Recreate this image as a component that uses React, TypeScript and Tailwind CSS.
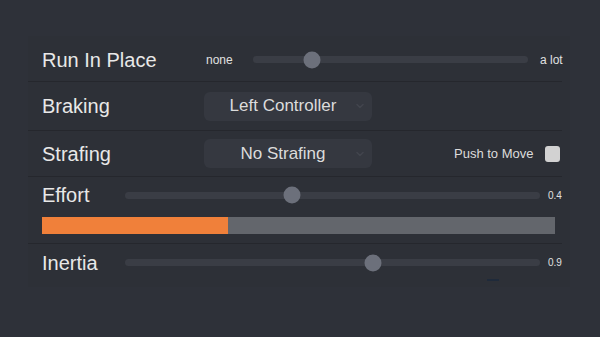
import { ChevronDown } from 'lucide-react';

const font = { fontFamily: '"Liberation Sans", Arial, sans-serif' };

function Slider({ value, className }: { value: number; className: string }) {
  return (
    <div className={`relative h-[7px] shrink-0 rounded-full bg-[#3a3d45] ${className}`}>
      <div
        className="absolute top-1/2 h-[17px] w-[17px] -translate-x-1/2 -translate-y-1/2 rounded-full bg-[#6c707b]"
        style={{ left: `${value * 100}%` }}
      />
    </div>
  );
}

function Select({ label }: { label: string }) {
  return (
    <div className="flex h-[29px] w-[168px] shrink-0 items-center rounded-md bg-[#353840] pl-[8px] pr-[6px]">
      <span className="flex-1 text-center text-[17px] text-[#dcdcdc]">{label}</span>
      <ChevronDown className="h-[12px] w-[12px] text-[#42454d]" strokeWidth={3} />
    </div>
  );
}

export default function App() {
  return (
    <div className="h-[337px] w-[600px] overflow-hidden bg-[#2e3139] pt-[36px]" style={font}>
      <div className="ml-[28px] w-[542px] bg-[#2d3037] pb-[6px]">
        <div className="mr-[8px] flex h-[46px] items-center whitespace-nowrap border-b border-[#25272d] pl-[14px] pt-[2px]">
          <span className="w-[164px] shrink-0 text-[20px] text-[#e8e8e8]">Run In Place</span>
          <span className="w-[47px] shrink-0 text-[12px] text-[#e0e0e0]">none</span>
          <Slider value={0.215} className="w-[275px]" />
          <span className="ml-[12px] shrink-0 text-[12px] text-[#e0e0e0]">a lot</span>
        </div>
        <div className="mr-[8px] flex h-[49px] items-center whitespace-nowrap border-b border-[#25272d] pl-[14px]">
          <span className="w-[162px] shrink-0 text-[20px] text-[#e8e8e8]">Braking</span>
          <Select label="Left Controller" />
        </div>
        <div className="mr-[8px] flex h-[46px] items-center whitespace-nowrap border-b border-[#25272d] pl-[14px]">
          <span className="w-[162px] shrink-0 text-[20px] text-[#e8e8e8]">Strafing</span>
          <Select label="No Strafing" />
          <span className="ml-[82px] shrink-0 text-[13px] text-[#dcdcdc]">Push to Move</span>
          <div className="ml-[11px] h-[16px] w-[15px] shrink-0 rounded-[3px] bg-[#d2d2d2]" />
        </div>
        <div className="mr-[8px] flex h-[67px] flex-col whitespace-nowrap border-b border-[#25272d] pl-[14px] pt-[5px]">
          <div className="flex h-[26px] items-center">
            <span className="w-[83px] shrink-0 text-[20px] text-[#e8e8e8]">Effort</span>
            <Slider value={0.403} className="w-[415px]" />
            <span className="ml-[8px] shrink-0 text-[10px] text-[#e0e0e0]">0.4</span>
          </div>
          <div className="mt-[9px] flex h-[17px] w-[513px] bg-[#63666c]">
            <div className="w-[186px] bg-[#f0803a]" />
          </div>
        </div>
        <div className="mr-[8px] flex h-[37px] items-center whitespace-nowrap pl-[14px]">
          <span className="w-[83px] shrink-0 text-[20px] text-[#e8e8e8]">Inertia</span>
          <Slider value={0.598} className="w-[415px]" />
          <span className="ml-[8px] shrink-0 text-[10px] text-[#e0e0e0]">0.9</span>
        </div>
      </div>
      <div className="-mt-[8px] ml-[487px] h-[2px] w-[12px] bg-[#1f2a3a]" />
    </div>
  );
}
